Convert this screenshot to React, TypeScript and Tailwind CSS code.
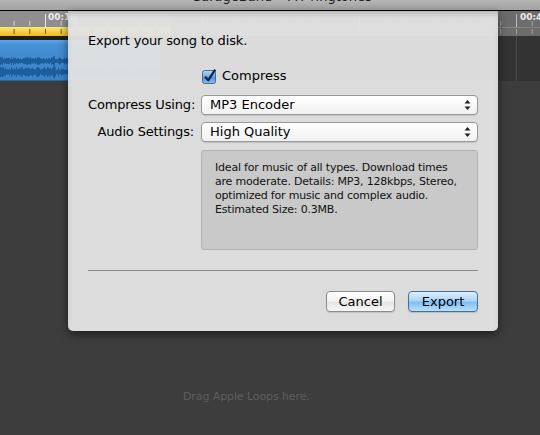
import React from "react";

function Ruler() {
  const ticks: React.ReactNode[] = [];
  for (let k = -3; k <= 31; k++) {
    const x = 45.5 + k * 15.7;
    const inCycle = x < 170;
    const major = ((k % 10) + 10) % 10 === 0;
    if (major) {
      ticks.push(<line key={"m" + k} x1={x} y1={3} x2={x} y2={16} stroke={inCycle ? "#e6e6e6" : "#bdbdbd"} strokeWidth={1} />);
    } else {
      ticks.push(<line key={"u" + k} x1={x} y1={10} x2={x} y2={15} stroke={inCycle ? "#d2d2d2" : "#a6a6a6"} strokeWidth={1} />);
    }
    ticks.push(<line key={"l" + k} x1={x} y1={18} x2={x} y2={23} stroke={inCycle ? "#6f5a17" : "#a0a0a0"} strokeWidth={1} />);
  }
  const labels = [
    { x: 48, t: "00:10" },
    { x: 520, t: "00:40" },
  ];
  return (
    <svg width="540" height="25" viewBox="0 0 540 25" className="block">
      <defs>
        <linearGradient id="yel" x1="0" y1="0" x2="0" y2="1">
          <stop offset="0" stopColor="#fde677" />
          <stop offset="1" stopColor="#f0b91c" />
        </linearGradient>
      </defs>
      <rect x="0" y="0" width="540" height="25" fill="#6c6c6c" />
      <rect x="0" y="0" width="170" height="16" fill="#8f8f8f" />
      <rect x="170" y="16" width="370" height="1" fill="#858585" />
      <rect x="0" y="16" width="170" height="9" fill="url(#yel)" />
      {ticks}
      {labels.map((l) => (
        <text key={l.t} x={l.x} y={9} fontSize="9" fontWeight="bold" fill="#ececec" fontFamily="DejaVu Sans, sans-serif">
          {l.t}
        </text>
      ))}
    </svg>
  );
}

function Waveform() {
  let seed = 7;
  const rnd = () => {
    seed = (seed * 9301 + 49297) % 233280;
    return seed / 233280;
  };
  let d1 = "";
  let d2 = "";
  for (let x = 0; x < 160; x += 1) {
    const a = 1.5 + rnd() * 2.5 + (x % 26 < 3 ? 1.5 : 0);
    const b = 2 + rnd() * 3 + (x % 26 < 3 ? 1.5 : 0);
    d1 += `M${x + 0.5} ${21 - a}V${21 + a}`;
    d2 += `M${x + 0.5} ${32 - b}V${32 + b}`;
  }
  return (
    <svg width="160" height="41" viewBox="0 0 160 41" className="block">
      <defs>
        <linearGradient id="reg" x1="0" y1="0" x2="0" y2="1">
          <stop offset="0" stopColor="#5ea6e8" />
          <stop offset="0.12" stopColor="#4590d6" />
          <stop offset="1" stopColor="#3a80c6" />
        </linearGradient>
      </defs>
      <rect x="0" y="0" width="160" height="41" fill="url(#reg)" />
      <path d={d1} stroke="#1d5d9c" strokeWidth="1" />
      <path d={d2} stroke="#1d5d9c" strokeWidth="1" />
      <rect x="0" y="40" width="160" height="1" fill="#2a629c" />
    </svg>
  );
}

function Arrows() {
  return (
    <svg width="7" height="12" viewBox="0 0 7 12" className="block">
      <path d="M0.5 4.5 L3.5 1 L6.5 4.5 Z" fill="#222" />
      <path d="M0.5 7.5 L3.5 11 L6.5 7.5 Z" fill="#222" />
    </svg>
  );
}

function Popup({ label, value }: { label: string; value: string }) {
  return (
    <div className="flex items-center gap-[7px]">
      <div className="w-[106px] text-right whitespace-nowrap leading-[16px] tracking-[-0.15px]">{label}</div>
      <div className="flex-1 h-[20px] flex items-center justify-between pl-[8px] pr-[6px] border border-[#989898] rounded-[4px] bg-[linear-gradient(#ffffff,#f1f1f1)] shadow-[0_1px_1px_rgba(0,0,0,0.12)]">
        <span className="leading-[16px]">{value}</span>
        <Arrows />
      </div>
    </div>
  );
}

function Checkbox() {
  return (
    <svg width="16" height="16" viewBox="0 0 16 16" className="block">
      <defs>
        <linearGradient id="cb" x1="0" y1="0" x2="0" y2="1">
          <stop offset="0" stopColor="#b9d8f7" />
          <stop offset="0.5" stopColor="#6aa8e8" />
          <stop offset="0.55" stopColor="#4d92df" />
          <stop offset="1" stopColor="#8cc4f5" />
        </linearGradient>
      </defs>
      <rect x="0.5" y="2.5" width="13" height="13" rx="2" fill="url(#cb)" stroke="#4a6a95" />
      <path d="M3.2 8.6 L6.2 12.3 L13.2 1.6" fill="none" stroke="#13213f" strokeWidth="2.2" strokeLinejoin="round" />
    </svg>
  );
}

export default function App() {
  return (
    <div className="relative w-[540px] h-[435px] overflow-hidden bg-[#3d3d3d] font-['DejaVu_Sans',sans-serif]">
      {/* window title bar */}
      <div className="h-[11px] border-b border-black bg-[linear-gradient(#b5b5b5,#a3a3a3)] overflow-hidden flex justify-center pl-[23px]">
        <span className="-mt-[10px] text-[13px] leading-[13px] text-[#1c1c1c] whitespace-nowrap">GarageBand – MT ringtones</span>
      </div>

      {/* timeline ruler */}
      <Ruler />

      {/* track row */}
      <div className="h-[45px] bg-[#333333] flex">
        <div className="w-[160px] flex flex-col">
          <div className="h-[4px] bg-[#1d1d1d]" />
          <Waveform />
        </div>
        <div className="w-[356px]" />
        <div className="w-px bg-[#484848]" />
      </div>

      {/* empty area */}
      <div className="pt-[309px] pl-[183px] text-[11px] leading-[14px] tracking-[-0.1px] text-[#5e5e5e] whitespace-nowrap">
        Drag Apple Loops here.
      </div>

      {/* export sheet */}
      <div className="absolute left-[68px] top-[11px] w-[430px] h-[320px] rounded-b-[5px] bg-[#e2e2e2f6] shadow-[inset_0_5px_6px_-3px_rgba(0,0,0,0.22),0_3px_10px_rgba(0,0,0,0.55)] flex flex-col px-[20px] pt-[22px] text-[13px] text-black">
        <div className="leading-[16px] h-[16px] tracking-[-0.15px]">Export your song to disk.</div>

        <div className="mt-[19px] h-[16px] flex items-center pl-[114px] gap-[4px]">
          <Checkbox />
          <span className="leading-[16px]">Compress</span>
        </div>

        <div className="mt-[11px]">
          <Popup label="Compress Using:" value="MP3 Encoder" />
        </div>
        <div className="mt-[7px]">
          <Popup label="Audio Settings:" value="High Quality" />
        </div>

        <div className="mt-[8px] ml-[113px] h-[100px] rounded-[3px] border border-[#b4b4b4] bg-[#c9c9c9] pl-[13px] pt-[10px] text-[11px] leading-[14px] tracking-[-0.2px] text-[#111]">
          Ideal for music of all types. Download times
          <br />
          are moderate. Details: MP3, 128kbps, Stereo,
          <br />
          optimized for music and complex audio.
          <br />
          Estimated Size: 0.3MB.
        </div>

        <div className="mt-[20px] h-px bg-[#8c8c8c]" />

        <div className="mt-[20px] flex justify-end gap-[13px]">
          <button className="w-[69px] h-[21px] rounded-[4px] border border-[#8a8a8a] bg-[linear-gradient(#ffffff_0%,#f3f3f3_45%,#e6e6e6_55%,#f7f7f7_100%)] shadow-[0_1px_1px_rgba(0,0,0,0.12)] text-[13px] leading-[16px] text-black">
            Cancel
          </button>
          <button className="w-[70px] h-[21px] rounded-[4px] border border-[#4a6d96] bg-[linear-gradient(#dcefff_0%,#aad5f8_45%,#80bff3_55%,#b9e1fd_100%)] shadow-[0_1px_1px_rgba(0,0,0,0.15)] text-[13px] leading-[16px] text-black">
            Export
          </button>
        </div>
      </div>
    </div>
  );
}
